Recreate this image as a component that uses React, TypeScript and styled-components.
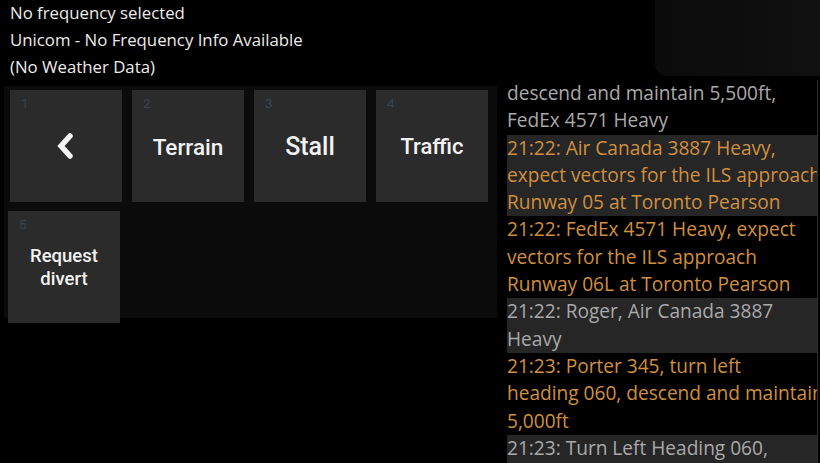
import styled, { createGlobalStyle } from "styled-components";

const Global = createGlobalStyle`
    html, body {
        margin: 0;
        padding: 0;
        background: #000000;
        overflow: hidden;
    }
    #root {
        width: 820px;
        height: 463px;
    }
`

const Screen = styled.div`
    width: 820px;
    height: 463px;
    background: #000000;
    display: flex;
    flex-direction: column;
    overflow: hidden;
    font-family: "Open Sans", "Noto Sans", sans-serif;
`

const Header = styled.div`
    height: 80px;
    display: flex;
    flex-direction: row;
    align-items: flex-start;
`

const InfoLines = styled.div`
    padding: 0px 0px 0px 10px;
    display: flex;
    flex-direction: column;
`

const InfoLine = styled.div`
    height: 27px;
    line-height: 25px;
    font-size: 16.8px;
    color: #ececec;
    white-space: nowrap;
`

const Ghost = styled.div`
    margin-left: auto;
    width: 165px;
    height: 76px;
    background: linear-gradient(90deg, #0b0b0b, #101010);
    border-bottom-left-radius: 12px;
`

const Body = styled.div`
    flex: 1;
    display: flex;
    flex-direction: row;
    min-height: 0;
`

const Panel = styled.div`
    margin: 6px 0px 0px 4px;
    width: 493px;
    height: 232px;
    background-color: #0b0b0b;
    padding: 4px 0px 0px 6px;
    box-sizing: border-box;
    display: grid;
    grid-template-columns: repeat(4, 112px);
    grid-auto-rows: 112px;
    column-gap: 10px;
    row-gap: 9px;
    align-content: start;
`

const Key = styled.div<{
    $shift?: number,
}>`
    position: relative;
    background-color: #2b2b2b;
    display: flex;
    justify-content: center;
    align-items: center;
    margin-left: ${(props)=>props.$shift||0}px;
    width: 112px;
`

const KeyNumber = styled.span`
    position: absolute;
    top: 5px;
    left: 11px;
    font-family: Roboto, "Noto Sans", sans-serif;
    font-size: 13.5px;
    color: #3a4550;
`

const KeyLabel = styled.span<{
    $size?: number,
}>`
    font-family: Roboto, "Noto Sans", sans-serif;
    font-weight: 500;
    font-size: ${(props)=>props.$size||22}px;
    line-height: 1.25;
    color: #f2f2f2;
    text-align: center;
    padding-top: 2px;
`

const Log = styled.div`
    flex: 1;
    margin: 0px 2px 0px 10px;
    overflow: hidden;
    border-right: 1px solid #2e2e2e;
    display: flex;
    flex-direction: column;
`

const Clipped = styled.div`
    height: 54.6px;
    overflow: hidden;
    display: flex;
    flex-direction: column;
    justify-content: flex-end;
    flex-shrink: 0;
`

const Entry = styled.div<{
    $atc?: boolean,
    $shade?: boolean,
}>`
    flex-shrink: 0;
    font-size: 19.1px;
    line-height: 27.3px;
    white-space: nowrap;
    color: ${(props)=>props.$atc ? "#d08f3e" : "#a9a9a9"};
    background-color: ${(props)=>props.$shade ? "#262626" : "transparent"};
`

const EntryLine = styled.div`
    overflow: hidden;
`

type line = { lines: string[], atc: boolean }

const entries: line[] = [
    { lines: ["21:22: Roger, turn right heading 040,", "descend and maintain 5,500ft,", "FedEx 4571 Heavy"], atc: false },
    { lines: ["21:22: Air Canada 3887 Heavy,", "expect vectors for the ILS approach", "Runway 05 at Toronto Pearson"], atc: true },
    { lines: ["21:22: FedEx 4571 Heavy, expect", "vectors for the ILS approach", "Runway 06L at Toronto Pearson"], atc: true },
    { lines: ["21:22: Roger, Air Canada 3887", "Heavy"], atc: false },
    { lines: ["21:23: Porter 345, turn left", "heading 060, descend and maintain", "5,000ft"], atc: true },
    { lines: ["21:23: Turn Left Heading 060,", "descend and maintain 5,000ft,", "Porter 345"], atc: false },
]

function Chevron(){
    return (
        <svg width="22" height="26" viewBox="0 0 22 26">
            <polyline points="15,3 6,13 15,23" fill="none" stroke="#f4f4f4" strokeWidth="5.5" strokeLinecap="round" strokeLinejoin="miter" />
        </svg>
    );
}

export default function App(){
    return (
        <>
            <Global />
            <Screen>
                <Header>
                    <InfoLines>
                        <InfoLine>No frequency selected</InfoLine>
                        <InfoLine>Unicom - No Frequency Info Available</InfoLine>
                        <InfoLine>(No Weather Data)</InfoLine>
                    </InfoLines>
                    <Ghost />
                </Header>
                <Body>
                    <Panel>
                        <Key>
                            <KeyNumber>1</KeyNumber>
                            <Chevron />
                        </Key>
                        <Key>
                            <KeyNumber>2</KeyNumber>
                            <KeyLabel $size={22.5}>Terrain</KeyLabel>
                        </Key>
                        <Key>
                            <KeyNumber>3</KeyNumber>
                            <KeyLabel $size={25}>Stall</KeyLabel>
                        </Key>
                        <Key>
                            <KeyNumber>4</KeyNumber>
                            <KeyLabel $size={22}>Traffic</KeyLabel>
                        </Key>
                        <Key $shift={-2}>
                            <KeyNumber>5</KeyNumber>
                            <KeyLabel $size={18.5}>Request<br />divert</KeyLabel>
                        </Key>
                    </Panel>
                    <Log>
                        <Clipped>
                            <Entry $atc={entries[0].atc}>
                                {entries[0].lines.map((t)=>(<EntryLine key={t}>{t}</EntryLine>))}
                            </Entry>
                        </Clipped>
                        {entries.slice(1).map((obj, i)=>(
                            <Entry key={i} $atc={obj.atc} $shade={i%2===0}>
                                {obj.lines.map((t)=>(<EntryLine key={t}>{t}</EntryLine>))}
                            </Entry>
                        ))}
                    </Log>
                </Body>
            </Screen>
        </>
    );
}
